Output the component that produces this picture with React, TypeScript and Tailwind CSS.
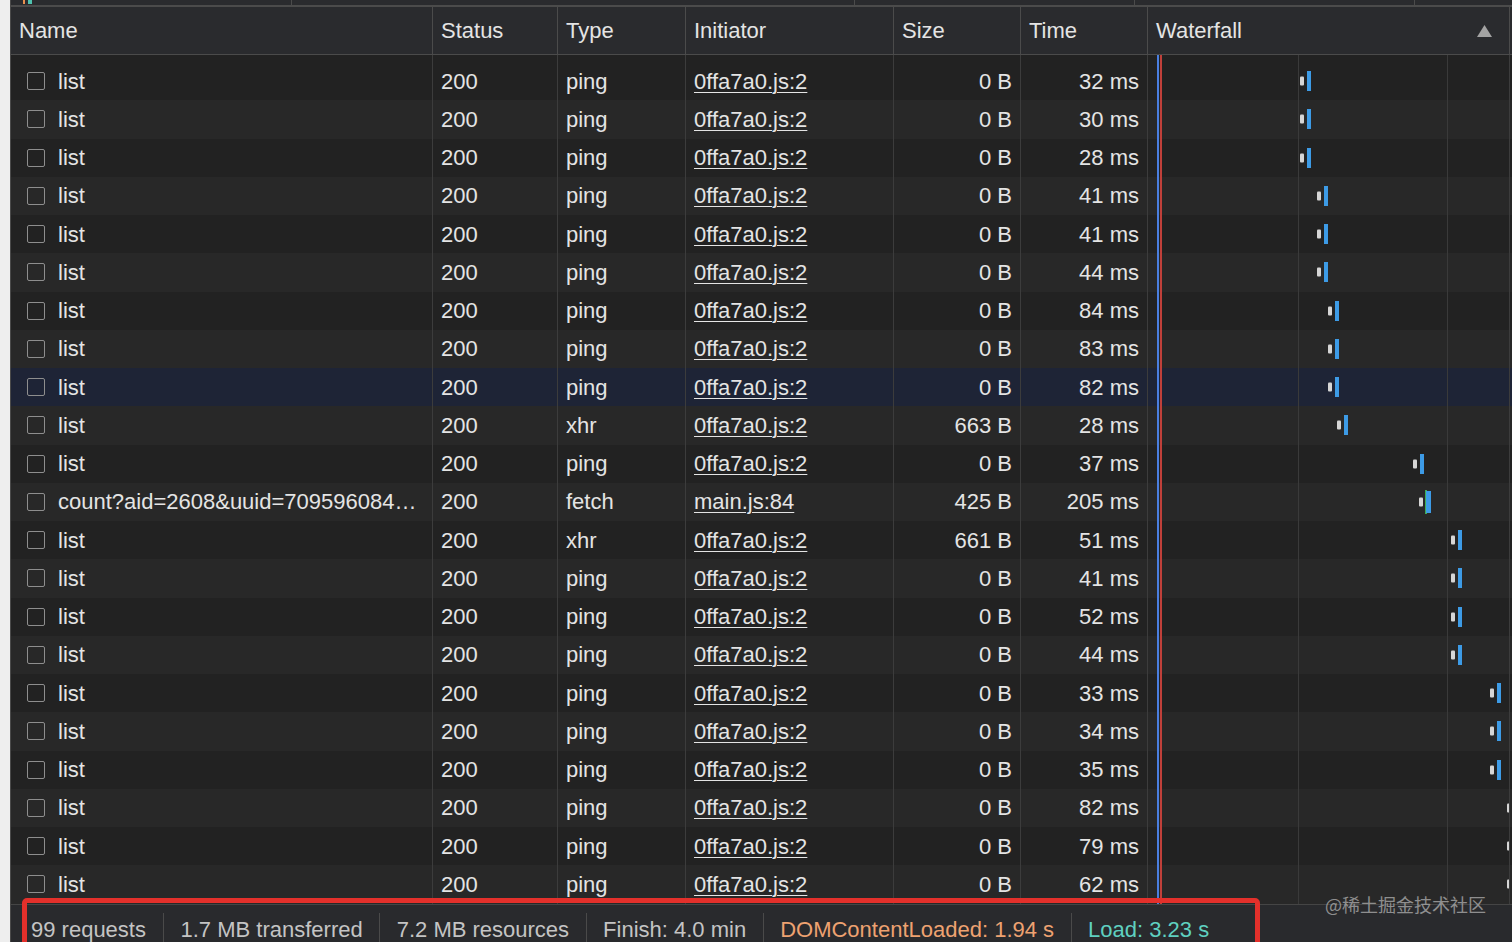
import React from 'react';

type Row = {
  name: string;
  type: string;
  initiator: string;
  size: string;
  time: string;
  bar: number;
  selected?: boolean;
  fetch?: boolean;
};

const rows: Row[] = [
  { name: 'list', type: 'ping', initiator: '0ffa7a0.js:2', size: '0 B', time: '32 ms', bar: 152 },
  { name: 'list', type: 'ping', initiator: '0ffa7a0.js:2', size: '0 B', time: '30 ms', bar: 152 },
  { name: 'list', type: 'ping', initiator: '0ffa7a0.js:2', size: '0 B', time: '28 ms', bar: 152 },
  { name: 'list', type: 'ping', initiator: '0ffa7a0.js:2', size: '0 B', time: '41 ms', bar: 169 },
  { name: 'list', type: 'ping', initiator: '0ffa7a0.js:2', size: '0 B', time: '41 ms', bar: 169 },
  { name: 'list', type: 'ping', initiator: '0ffa7a0.js:2', size: '0 B', time: '44 ms', bar: 169 },
  { name: 'list', type: 'ping', initiator: '0ffa7a0.js:2', size: '0 B', time: '84 ms', bar: 180 },
  { name: 'list', type: 'ping', initiator: '0ffa7a0.js:2', size: '0 B', time: '83 ms', bar: 180 },
  { name: 'list', type: 'ping', initiator: '0ffa7a0.js:2', size: '0 B', time: '82 ms', bar: 180, selected: true },
  { name: 'list', type: 'xhr', initiator: '0ffa7a0.js:2', size: '663 B', time: '28 ms', bar: 189 },
  { name: 'list', type: 'ping', initiator: '0ffa7a0.js:2', size: '0 B', time: '37 ms', bar: 265 },
  { name: 'count?aid=2608&uuid=709596084…', type: 'fetch', initiator: 'main.js:84', size: '425 B', time: '205 ms', bar: 271, fetch: true },
  { name: 'list', type: 'xhr', initiator: '0ffa7a0.js:2', size: '661 B', time: '51 ms', bar: 303 },
  { name: 'list', type: 'ping', initiator: '0ffa7a0.js:2', size: '0 B', time: '41 ms', bar: 303 },
  { name: 'list', type: 'ping', initiator: '0ffa7a0.js:2', size: '0 B', time: '52 ms', bar: 303 },
  { name: 'list', type: 'ping', initiator: '0ffa7a0.js:2', size: '0 B', time: '44 ms', bar: 303 },
  { name: 'list', type: 'ping', initiator: '0ffa7a0.js:2', size: '0 B', time: '33 ms', bar: 342 },
  { name: 'list', type: 'ping', initiator: '0ffa7a0.js:2', size: '0 B', time: '34 ms', bar: 342 },
  { name: 'list', type: 'ping', initiator: '0ffa7a0.js:2', size: '0 B', time: '35 ms', bar: 342 },
  { name: 'list', type: 'ping', initiator: '0ffa7a0.js:2', size: '0 B', time: '82 ms', bar: 359 },
  { name: 'list', type: 'ping', initiator: '0ffa7a0.js:2', size: '0 B', time: '79 ms', bar: 359 },
  { name: 'list', type: 'ping', initiator: '0ffa7a0.js:2', size: '0 B', time: '62 ms', bar: 359 },
];

const cols = 'grid grid-cols-[422px_125px_128px_208px_127px_127px_1fr]';
const cell = 'border-r border-[#3c3c3c] flex items-center px-2 overflow-hidden whitespace-nowrap';

function WaterfallLines() {
  return (
    <>
      <div className="absolute top-0 bottom-0 left-[9px] w-[2px] bg-[#4a7fe0]" />
      <div className="absolute top-0 bottom-0 left-[12px] w-[2px] bg-[#c0403a]" />
      <div className="absolute top-0 bottom-0 left-[150px] w-px bg-[#3a3a3a]" />
      <div className="absolute top-0 bottom-0 left-[299px] w-px bg-[#3a3a3a]" />
    </>
  );
}

function Bar({ x, fetch }: { x: number; fetch?: boolean }) {
  return (
    <>
      <div
        className="absolute top-1/2 -translate-y-1/2 w-[4px] h-[9px] bg-[#d6d6d6] rounded-[1px]"
        style={{ left: x }}
      />
      {fetch && (
        <div
          className="absolute top-1/2 -translate-y-1/2 w-[2px] h-[24px] bg-[#3fae54]"
          style={{ left: x + 6 }}
        />
      )}
      <div
        className={`absolute top-1/2 -translate-y-1/2 bg-[#3d9be6] ${fetch ? 'w-[5px] h-[22px]' : 'w-[4px] h-[20px]'}`}
        style={{ left: x + 7 }}
      />
    </>
  );
}

function App() {
  return (
    <div
      className="relative w-[1512px] h-[942px] overflow-hidden bg-[#eeeeee]"
      style={{ fontFamily: '"Liberation Sans", Arial, sans-serif' }}
    >
      <div className="ml-[10px] h-full flex flex-col bg-[#232323] border-l border-[#4a4a4a] text-[22px] text-[#e4e4e4]">
        {/* overview strip */}
        <div className="relative h-[5px] shrink-0 bg-[#2a2b2e] border-b-2 border-[#4b4b4b] box-content">
          <div className="absolute left-[12px] top-0 w-[2px] h-[4px] bg-[#e8914f]" />
          <div className="absolute left-[17px] top-0 w-[4px] h-[4px] bg-[#4fc3b0]" />
          <div className="absolute left-[280px] top-0 w-px h-full bg-[#4b4b4b]" />
          <div className="absolute left-[843px] top-0 w-px h-full bg-[#4b4b4b]" />
          <div className="absolute left-[1123px] top-0 w-px h-full bg-[#4b4b4b]" />
          <div className="absolute left-[1403px] top-0 w-px h-full bg-[#4b4b4b]" />
        </div>

        {/* header */}
        <div className={`${cols} h-[48px] shrink-0 bg-[#2a2b2e] border-b border-[#4b4b4b]`}>
          {['Name', 'Status', 'Type', 'Initiator', 'Size', 'Time'].map((h) => (
            <div key={h} className="border-r border-[#4b4b4b] flex items-center px-2 whitespace-nowrap">
              {h}
            </div>
          ))}
          <div className="border-r border-[#4b4b4b] flex items-center justify-between pl-2 pr-[17px] mr-[2px]">
            <span>Waterfall</span>
            <svg width="15" height="12" viewBox="0 0 15 12">
              <path d="M7.5 0 L15 12 L0 12 Z" fill="#a3a3a3" />
            </svg>
          </div>
        </div>

        {/* rows */}
        <div className="flex-1 min-h-0 overflow-hidden">
          <div className={`${cols} h-[7px] bg-[#222222]`}>
            {[0, 1, 2, 3, 4, 5].map((i) => (
              <div key={i} className="border-r border-[#3c3c3c]" />
            ))}
            <div className="relative border-r border-[#3c3c3c] mr-[2px]">
              <WaterfallLines />
            </div>
          </div>
          {rows.map((r, i) => (
            <div
              key={i}
              className={`${cols} h-[38.25px] ${
                r.selected ? 'bg-[#1e2436]' : i % 2 === 0 ? 'bg-[#222222]' : 'bg-[#282828]'
              }`}
            >
              <div className={`${cell} pl-4 gap-[13px]`}>
                <span className="w-[18px] h-[18px] shrink-0 rounded-[2px] border-[1.5px] border-[#8e8e8e]" />
                <span>{r.name}</span>
              </div>
              <div className={cell}>200</div>
              <div className={cell}>{r.type}</div>
              <div className={cell}>
                <span className="underline underline-offset-[3px] decoration-1">{r.initiator}</span>
              </div>
              <div className={`${cell} justify-end`}>{r.size}</div>
              <div className={`${cell} justify-end`}>{r.time}</div>
              <div className="relative border-r border-[#3c3c3c] mr-[2px] overflow-hidden">
                <WaterfallLines />
                <Bar x={r.bar} fetch={r.fetch} />
              </div>
            </div>
          ))}
        </div>

        {/* status bar */}
        <div className="h-[38px] shrink-0 flex items-center pt-[12px] bg-[#292a2d] border-t border-[#454545] text-[22px] text-[#c4c4c4] whitespace-nowrap">
          <div className="w-[152px] pl-[20px]">99 requests</div>
          <div className="px-[16.5px] border-l border-[#4a4a4a]">1.7 MB transferred</div>
          <div className="px-[16.5px] border-l border-[#4a4a4a]">7.2 MB resources</div>
          <div className="px-[16.5px] border-l border-[#4a4a4a]">Finish: 4.0 min</div>
          <div className="px-[16.5px] border-l border-[#4a4a4a] text-[#eea271]">DOMContentLoaded: 1.94 s</div>
          <div className="px-[16.5px] border-l border-[#4a4a4a] text-[#5fd0c0]">Load: 3.23 s</div>
        </div>
      </div>

      {/* annotation box */}
      <div className="absolute left-[22px] top-[898px] w-[1238px] h-[70px] border-[5px] border-[#e3302b] rounded-[5px] pointer-events-none" />

      {/* watermark */}
      <div
        className="absolute left-[1325px] top-[891px] text-[18px] text-[#a8a8a8] opacity-80 whitespace-nowrap"
        style={{ fontFamily: '"Noto Sans CJK SC", "Liberation Sans", sans-serif' }}
      >
        @稀土掘金技术社区
      </div>
    </div>
  );
}

export default App;
